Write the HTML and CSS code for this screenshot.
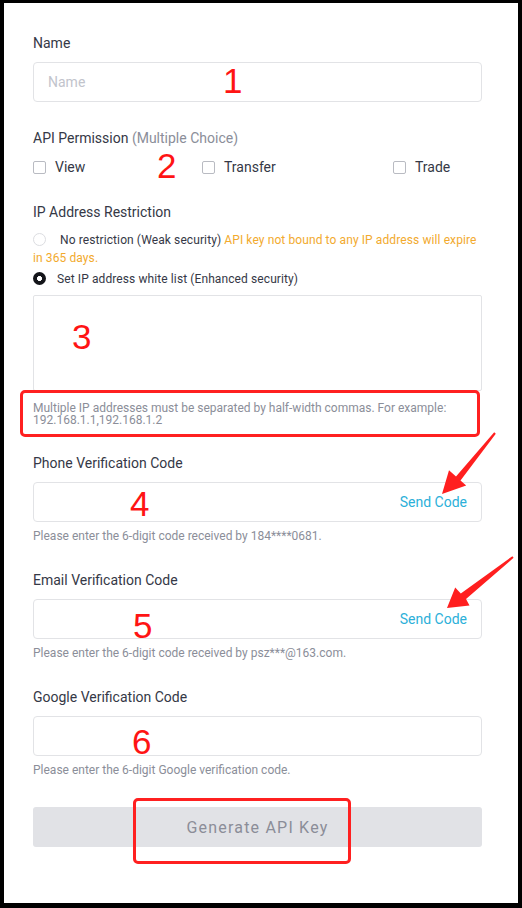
FILE: index.html
```html
<!DOCTYPE html>
<html lang="en">
<head>
<meta charset="utf-8">
<title>Create API Key</title>
<link rel="stylesheet" href="styles.css">
</head>
<body>
<div class="frame">
  <form class="form">
    <div class="field">
      <label class="label">Name</label>
      <div class="input-box"><input class="input" type="text" placeholder="Name"></div>
    </div>

    <div class="field gap-lg">
      <label class="label">API Permission <span class="muted">(Multiple Choice)</span></label>
      <div class="checks">
        <span class="check"><span class="box"></span>View</span>
        <span class="check"><span class="box"></span>Transfer</span>
        <span class="check"><span class="box"></span>Trade</span>
      </div>
    </div>

    <div class="field gap-ip">
      <label class="label">IP Address Restriction</label>
      <p class="radio-line first"><span class="radio"></span>No restriction (Weak security) <span class="warn">API key not bound to any IP address will expire in 365 days.</span></p>
      <p class="radio-line second"><span class="radio on"></span>Set IP address white list (Enhanced security)</p>
      <textarea class="ip-box"></textarea>
      <p class="ip-hint">Multiple IP addresses must be separated by half-width commas. For example: 192.168.1.1,192.168.1.2</p>
    </div>

    <div class="field gap-phone">
      <label class="label">Phone Verification Code</label>
      <div class="input-box"><input class="input" type="text"><span class="send">Send Code</span></div>
      <p class="hint">Please enter the 6-digit code received by 184****0681.</p>
    </div>

    <div class="field gap-md">
      <label class="label">Email Verification Code</label>
      <div class="input-box"><input class="input" type="text"><span class="send">Send Code</span></div>
      <p class="hint">Please enter the 6-digit code received by psz***@163.com.</p>
    </div>

    <div class="field gap-md">
      <label class="label">Google Verification Code</label>
      <div class="input-box"><input class="input" type="text"></div>
      <p class="hint">Please enter the 6-digit Google verification code.</p>
    </div>

    <button class="submit" type="button">Generate API Key</button>
  </form>

  <span class="num n1">1</span>
  <span class="num n2">2</span>
  <span class="num n3">3</span>
  <span class="num n4">4</span>
  <span class="num n5">5</span>
  <span class="num n6">6</span>
  <span class="mark mark-hint"></span>
  <span class="mark mark-btn"></span>
  <svg class="arrows" width="522" height="908" viewBox="0 0 522 908">
    <polygon fill="#ff1f1f" points="494.2,432.3 495.8,433.7 460.5,480.6 466.2,485.4 442,494 449.0,470.2 456.0,476.6"/>
    <polygon fill="#ff1f1f" points="512.4,556.2 513.6,557.8 466.0,599.0 469.5,605.5 447,608 455.2,587.6 460.8,593.4"/>
  </svg>
</div>
</body>
</html>
```

FILE: styles.css
```css
* { box-sizing: border-box; }

html, body {
  margin: 0;
  padding: 0;
  background: #000;
}

body {
  font-family: Roboto, "Liberation Sans", Arial, sans-serif;
  color: #353846;
}

.frame {
  position: relative;
  width: 514px;
  height: 900px;
  margin: 3px 4px 0;
  background: #fff;
}

.form {
  display: flex;
  flex-direction: column;
  padding: 30px 36px 0 29px;
}

.field {
  display: flex;
  flex-direction: column;
}

.gap-lg { margin-top: 26px; }
.gap-ip { margin-top: 25px; }
.gap-phone { margin-top: 27px; }
.gap-md { margin-top: 26px; }

.label {
  font-size: 14px;
  line-height: 20px;
  color: #353846;
}

.muted { color: #8b8e99; }

.input-box {
  display: flex;
  align-items: center;
  height: 40px;
  margin-top: 9px;
  border: 1px solid #e2e3e6;
  border-radius: 4px;
  background: #fff;
}

.input {
  flex: 1;
  min-width: 0;
  height: 100%;
  border: 0;
  outline: 0;
  padding: 0 14px;
  background: transparent;
  font-family: inherit;
  font-size: 14px;
  color: #353846;
}

.input::placeholder { color: #c2c4cc; }

.send {
  padding-right: 14px;
  font-size: 14px;
  color: #2cb0d9;
}

.hint {
  margin: 6px 0 0;
  font-size: 12px;
  line-height: 16px;
  color: #8b8e99;
}

.checks {
  display: grid;
  grid-template-columns: 169px 191px 1fr;
  margin-top: 9px;
  font-size: 14px;
  line-height: 20px;
  color: #353846;
}

.check {
  display: flex;
  align-items: center;
  gap: 9px;
}

.box {
  width: 13px;
  height: 13px;
  border: 1px solid #b9bbc2;
  border-radius: 2px;
  background: #fff;
}

.radio-line {
  margin: 0;
  font-size: 12px;
  line-height: 18px;
  letter-spacing: 0.1px;
  color: #353846;
}

.radio-line.first { margin-top: 9px; }
.radio-line.second { margin-top: 3px; }

.radio {
  display: inline-block;
  width: 13px;
  height: 13px;
  margin-right: 14px;
  border: 1px solid #dcdde1;
  border-radius: 50%;
  vertical-align: -2px;
  background: #fff;
}

.second .radio { margin-right: 11px; }

.radio.on {
  border: 0;
  background: radial-gradient(circle, #fff 0 2.2px, #14151a 2.8px);
}

.warn { color: #f2aa2e; }

.ip-box {
  display: block;
  width: 100%;
  height: 96px;
  margin-top: 7px;
  border: 1px solid #e2e3e6;
  border-radius: 2px;
  resize: none;
  outline: 0;
  font-family: inherit;
}

.ip-hint {
  margin: 11px 0 0;
  font-size: 12px;
  line-height: 12px;
  color: #8b8e99;
}

.submit {
  height: 40px;
  margin-top: 29px;
  border: 0;
  border-radius: 3px;
  background: #e1e2e6;
  font-family: inherit;
  font-size: 16px;
  letter-spacing: 1.2px;
  color: #8b8d98;
}

/* annotation overlay */
.num {
  position: absolute;
  font-family: "Liberation Sans", Arial, sans-serif;
  font-size: 35px;
  line-height: 1;
  color: #ff1414;
}

.n1 { left: 219px; top: 60px; }
.n2 { left: 153px; top: 145px; }
.n3 { left: 68px; top: 316px; }
.n4 { left: 126px; top: 483px; }
.n5 { left: 129px; top: 605px; }
.n6 { left: 128px; top: 721px; }

.mark {
  position: absolute;
  border: 3px solid #ff2020;
  border-radius: 5px;
}

.mark-hint { left: 16px; top: 387px; width: 460px; height: 47px; }
.mark-btn { left: 129px; top: 795px; width: 218px; height: 66px; }

.arrows {
  position: absolute;
  left: -4px;
  top: -3px;
  pointer-events: none;
}
```
